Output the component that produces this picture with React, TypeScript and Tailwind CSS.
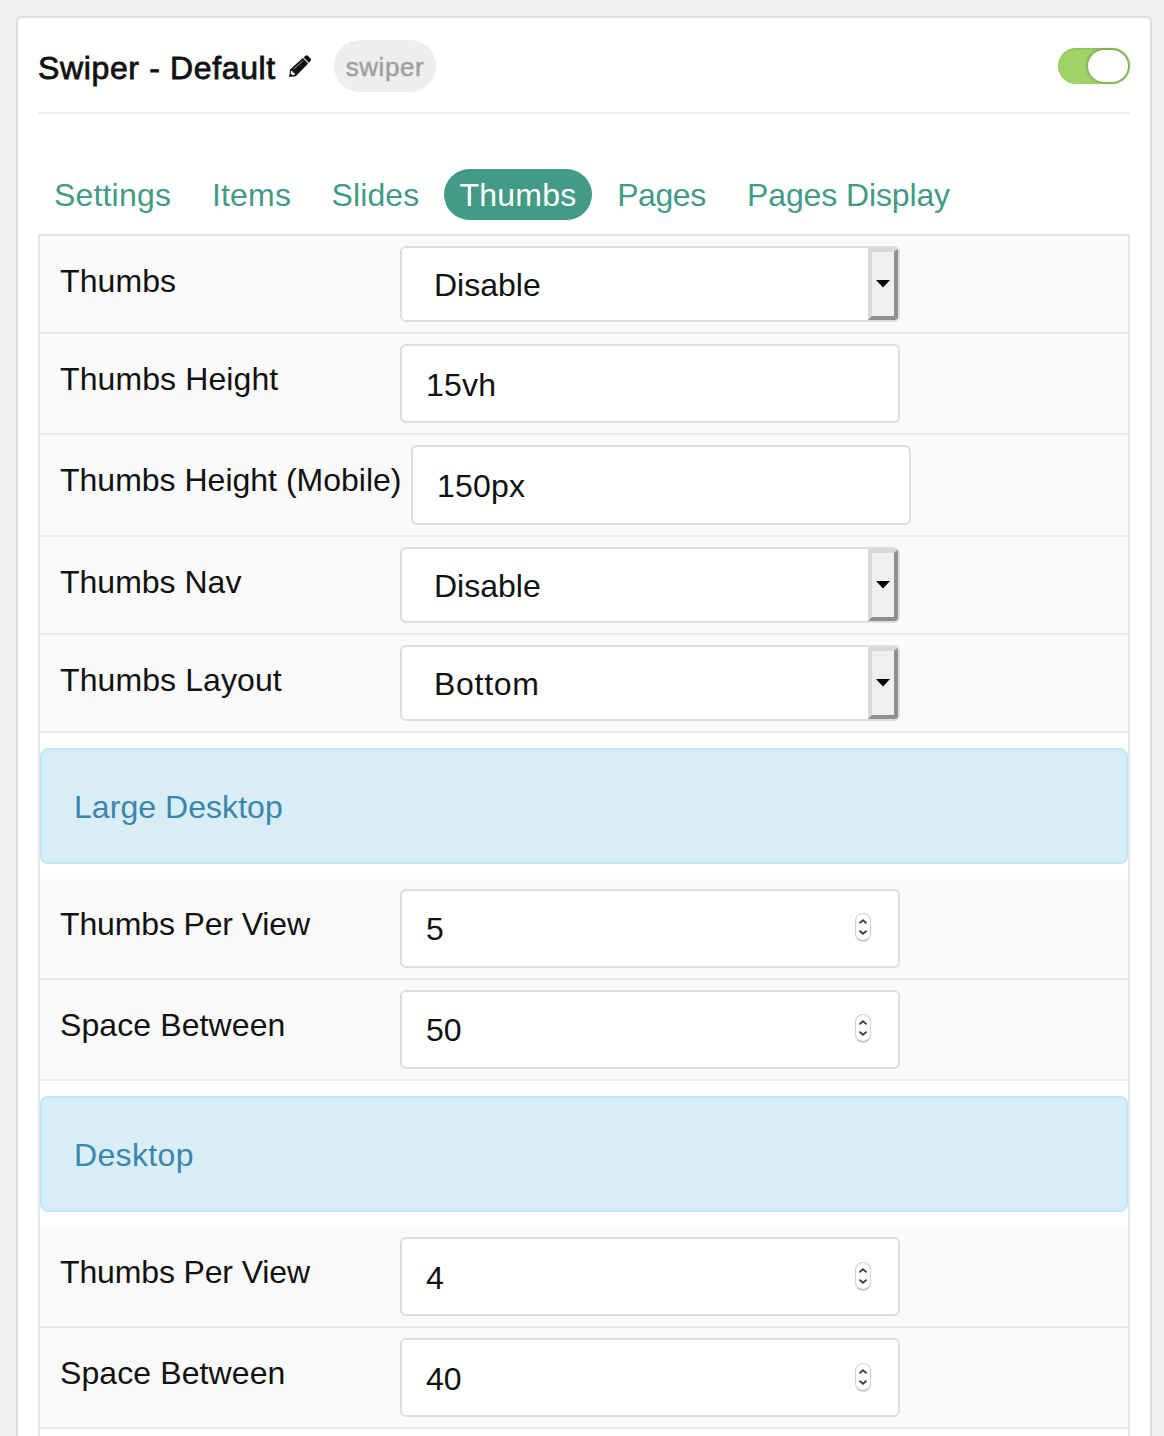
type Control = { kind: "select" | "text" | "number"; value: string };

const tabs = [
  { name: "Settings", box: "w-[149px]", text: "tracking-[0.2px]" },
  { name: "Items", box: "w-[111px]", text: "tracking-[0.2px]" },
  { name: "Slides", box: "w-[119px]", text: "tracking-[0.1px]" },
  { name: "Thumbs", box: "w-[148px]", text: "tracking-[0.2px]" },
  { name: "Pages", box: "w-[121px]", text: "tracking-[-0.4px]" },
  { name: "Pages Display", box: "w-[235px]", text: "tracking-[-0.12px]" },
];

function PencilIcon() {
  return (
    <svg viewBox="0 0 22 22" className="ml-[14px] mt-[37px] h-[22px] w-[22px] shrink-0" fill="#111">
      <path d="M16.4 0.8a1.8 1.8 0 0 1 2.5 0l2.6 2.8a1.8 1.8 0 0 1 0 2.4l-1.5 1.7-5.4-5.3z" />
      <path d="M13.8 3.1l5.4 5.4L6.8 21.2 0.2 22l0.9-7.6z" />
      <path d="M4.6 14.2L14.2 5.6" stroke="#fff" strokeWidth="0.6" fill="none" />
      <path d="M2 16.2l1.2-0.4 0.9 1.6 1.6 0.6 0.2 1.4-2.4 0.9-1.9-1.8z" fill="#fff" />
    </svg>
  );
}

function Stepper({ offset }: { offset: string }) {
  return (
    <span className={`flex h-[28px] w-[16px] items-center justify-center rounded-full border border-[#d4d4d4] border-b-[#b8b8b8] bg-white shadow-[0_1px_1px_rgba(0,0,0,0.15)] ${offset}`}>
      <svg viewBox="0 0 8 16" className="h-4 w-2" fill="none" stroke="#3c3c3c" strokeWidth="1.8">
        <path d="M0.4 4.3L4 1.2l3.6 3.1M0.4 11.7L4 14.8l3.6-3.1" />
      </svg>
    </span>
  );
}

function Field({ kind, value, low }: Control & { low?: boolean }) {
  if (kind === "select") {
    return (
      <div className="flex h-[76px] w-[500px] justify-between overflow-hidden rounded-[6px] border-2 border-[#ddd] bg-white">
        <span className={`pl-8 pt-[18px] leading-[38px] ${value === "Bottom" ? "tracking-[0.7px]" : ""}`}>{value}</span>
        <span className="flex w-[30px] items-start justify-center border-4 border-b-[#8f8f8f] border-l-[#d9d9d9] border-r-[#8f8f8f] border-t-[#d9d9d9] bg-[#efefef]">
          <svg viewBox="0 0 14 8" className="mt-7 h-2 w-[14px]" fill="#000">
            <path d="M0 0h14L7 7.6z" />
          </svg>
        </span>
      </div>
    );
  }
  return (
    <div className="flex h-full w-[500px] justify-between rounded-[6px] border-2 border-[#ddd] bg-white pl-6 pr-[27px]">
      <span className={`leading-[38px] ${low || kind === "text" ? "pt-[20px]" : "pt-[19px]"} ${kind === "text" ? "tracking-[0.2px]" : ""}`}>{value}</span>
      {kind === "number" && <Stepper offset={low ? "mt-[23px]" : "mt-[22px]"} />}
    </div>
  );
}

type RowProps = Control & {
  label: string;
  height?: string;
  labelWidth?: string;
  tracking?: string;
  low?: boolean;
};

function Row({ label, height = "h-[101px]", labelWidth = "w-[340px]", tracking = "tracking-[0.1px]", kind, value, low }: RowProps) {
  return (
    <div className={`flex border-b-2 border-[#ececec] bg-[#fafafa] py-[10px] pl-5 ${height}`}>
      <div className={`shrink-0 whitespace-nowrap pt-[16px] leading-[38px] ${labelWidth} ${tracking}`}>{label}</div>
      <Field kind={kind} value={value} low={low} />
    </div>
  );
}

function Banner({ title, tracking }: { title: string; tracking: string }) {
  return (
    <div className={`my-[15px] h-[116px] rounded-[8px] border-2 border-[#bce8f1] bg-[#d9edf7] pl-8 pt-[38px] leading-[38px] text-[#3a87ad] ${tracking}`}>
      {title}
    </div>
  );
}

export default function App() {
  return (
    <div className="h-[1436px] w-[1164px] overflow-hidden bg-[#efefef] pl-4 pt-4 font-['Liberation_Sans',Arial,sans-serif] text-[32px] text-[#111]">
      <div className="h-[1500px] w-[1136px] rounded-t-[6px] border-2 border-[#ddd] bg-white px-5">
        <header className="flex h-24 items-start border-b-2 border-[#eee]">
          <h1 className="mt-[31px] w-[237px] shrink-0 whitespace-nowrap leading-[38px] tracking-[0.64px] [-webkit-text-stroke:0.8px_#111]">Swiper - Default</h1>
          <PencilIcon />
          <span className="ml-[23px] mt-[22px] flex h-[52px] w-[102px] items-center justify-center rounded-full bg-[#eee] pt-[2px] text-[26px] tracking-[0.6px] text-[#a0a0a0] [-webkit-text-stroke:0.5px_#a0a0a0]">
            swiper
          </span>
          <span className="ml-auto mt-[30px] flex h-9 w-[72px] justify-end rounded-full bg-[#a0d468] p-[2px] shadow-[inset_0_1px_3px_rgba(0,0,0,0.12)]">
            <span className="h-8 w-10 rounded-full bg-white shadow-[0_0_4px_rgba(0,0,0,0.4)]" />
          </span>
        </header>
        <nav className="flex h-[120px] items-start gap-[9px] pt-[55px] text-[#439a86]">
          {tabs.map((t) => (
            <span
              key={t.name}
              className={`flex h-[51px] shrink-0 items-center justify-center whitespace-nowrap rounded-full ${t.box} ${t.text} ${t.name === "Thumbs" ? "bg-[#439a86] text-white" : ""}`}
            >
              {t.name}
            </span>
          ))}
        </nav>
        <section className="h-[1300px] border-2 border-[#e5e5e5]">
          <Row label="Thumbs" height="h-[98px]" kind="select" value="Disable" />
          <Row label="Thumbs Height" kind="text" value="15vh" />
          <Row label="Thumbs Height (Mobile)" height="h-[102px]" labelWidth="w-[351px]" tracking="tracking-normal" kind="text" value="150px" />
          <Row label="Thumbs Nav" height="h-[98px]" tracking="tracking-normal" kind="select" value="Disable" />
          <Row label="Thumbs Layout" height="h-[98px]" kind="select" value="Bottom" />
          <Banner title="Large Desktop" tracking="tracking-[0.05px]" />
          <Row label="Thumbs Per View" tracking="tracking-[-0.14px]" kind="number" value="5" />
          <Row label="Space Between" kind="number" value="50" />
          <Banner title="Desktop" tracking="tracking-[0.35px]" />
          <Row label="Thumbs Per View" tracking="tracking-[-0.14px]" kind="number" value="4" low />
          <Row label="Space Between" kind="number" value="40" low />
        </section>
      </div>
    </div>
  );
}
